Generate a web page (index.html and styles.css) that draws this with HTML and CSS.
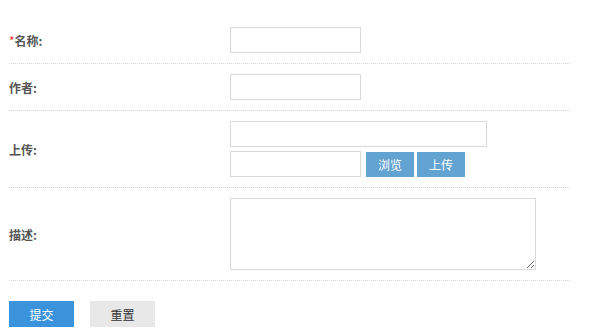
FILE: index.html
```html
<!DOCTYPE html>
<html lang="zh-CN">
<head>
  <meta charset="UTF-8" />
  <title>上传</title>
  <link rel="stylesheet" href="styles.css">
</head>
<body>
  <form class="upload-form">
    <div class="form-row">
      <label class="form-label"><span class="required">*</span>名称:</label>
      <div class="form-field">
        <input type="text" class="input-short" />
      </div>
    </div>
    <div class="form-row">
      <label class="form-label">作者:</label>
      <div class="form-field">
        <input type="text" class="input-short" />
      </div>
    </div>
    <div class="form-row">
      <label class="form-label">上传:</label>
      <div class="form-field field-stack">
        <input type="text" class="input-long" />
        <div class="file-line">
          <input type="text" class="input-short" />
          <button type="button" class="btn-small">浏览</button>
          <button type="button" class="btn-small">上传</button>
        </div>
      </div>
    </div>
    <div class="form-row">
      <label class="form-label">描述:</label>
      <div class="form-field">
        <textarea class="input-area"></textarea>
      </div>
    </div>
    <div class="form-actions">
      <button type="submit" class="btn-submit">提交</button>
      <button type="reset" class="btn-reset">重置</button>
    </div>
  </form>
</body>
</html>
```

FILE: styles.css
```css
body {
  margin: 0;
  font-family: "Noto Sans CJK SC", "Liberation Sans", sans-serif;
  font-size: 12px;
  color: #555;
  background: #fff;
}
.upload-form {
  width: 561px;
  margin: 17px 0 0 9px;
}
.form-row {
  display: flex;
  align-items: center;
  padding: 10px 0;
  border-bottom: 1px dotted #d4d4d4;
}
.form-label {
  width: 221px;
  flex-shrink: 0;
  font-weight: bold;
  color: #555;
}
.required {
  color: #e33;
  font-weight: normal;
}
.field-stack {
  display: flex;
  flex-direction: column;
  gap: 4px;
}
.file-line {
  display: flex;
  align-items: center;
}
input[type="text"],
textarea {
  box-sizing: border-box;
  border: 1px solid #d9d9d9;
  height: 26px;
  padding: 2px 4px;
  font-family: inherit;
  font-size: 12px;
  margin: 0;
  outline: none;
}
.input-short {
  width: 131px;
}
.input-long {
  width: 257px;
}
.input-area {
  width: 306px;
  height: 72px;
  display: block;
}
button {
  font-family: inherit;
  font-size: 12px;
  border: none;
  cursor: pointer;
}
.btn-small {
  width: 48px;
  height: 25px;
  margin-left: 5px;
  background: #62a3d2;
  color: #fff;
}
.btn-small + .btn-small {
  margin-left: 3px;
}
.form-actions {
  display: flex;
  gap: 16px;
  margin-top: 20px;
}
.btn-submit {
  width: 65px;
  height: 26px;
  background: #3a93db;
  color: #fff;
}
.btn-reset {
  width: 65px;
  height: 26px;
  background: #e8e8e8;
  color: #333;
}
```
